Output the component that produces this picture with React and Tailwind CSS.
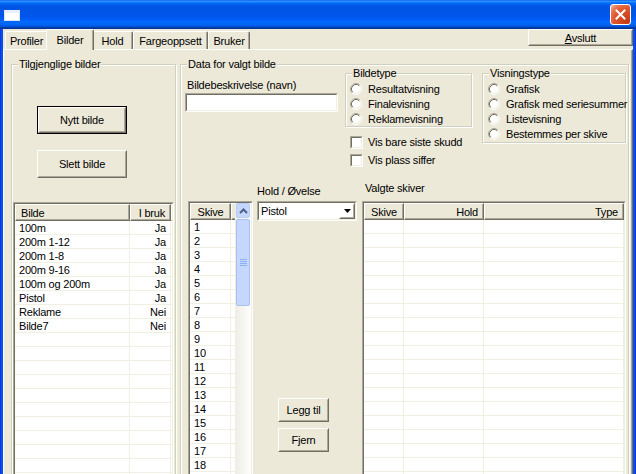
import React from 'react';

const sunkenOuter = 'border border-t-[#ACA899] border-l-[#ACA899] border-r-white border-b-white';
const sunkenInner = 'border border-t-[#716F64] border-l-[#716F64] border-r-[#F1EFE2] border-b-[#F1EFE2]';

function Btn({ def, className = '', children }) {
  return (
    <div className={`${def ? 'border border-black' : ''} ${className}`}>
      <div className="h-full w-full border border-t-white border-l-white border-r-[#716F64] border-b-[#716F64]">
        <div className="h-full w-full flex items-center justify-center border border-transparent border-r-[#ACA899] border-b-[#ACA899]">
          {children}
        </div>
      </div>
    </div>
  );
}

function Group({ label, className = '', children }) {
  return (
    <div className={`relative border border-[#D0D0BF] shadow-[inset_1px_1px_0_#fff,1px_1px_0_#fff] ${className}`}>
      <span className="absolute -top-[8px] left-[6px] bg-[#ECE9D8] px-[1px] leading-[14px]">{label}</span>
      {children}
    </div>
  );
}

function Radio({ label }) {
  return (
    <div className="flex items-center h-[15px]">
      <svg width="12" height="12" viewBox="0 0 12 12" className="shrink-0">
        <circle cx="6" cy="6" r="4.5" fill="#fff" />
        <path d="M2.11 9.89 A5.5 5.5 0 0 1 9.89 2.11" fill="none" stroke="#ACA899" />
        <path d="M9.89 2.11 A5.5 5.5 0 0 1 2.11 9.89" fill="none" stroke="#fff" />
        <path d="M2.82 9.18 A4.5 4.5 0 0 1 9.18 2.82" fill="none" stroke="#716F64" />
        <path d="M9.18 2.82 A4.5 4.5 0 0 1 2.82 9.18" fill="none" stroke="#F1EFE2" />
      </svg>
      <span className="ml-[6px] whitespace-nowrap">{label}</span>
    </div>
  );
}

function Check({ label }) {
  return (
    <div className="flex items-center h-[18px]">
      <div className={`w-[13px] h-[13px] ${sunkenOuter}`}>
        <div className={`w-full h-full bg-white ${sunkenInner}`} />
      </div>
      <span className="ml-[5px] whitespace-nowrap">{label}</span>
    </div>
  );
}

function HeadCell({ w, align = 'left', children }) {
  const j = align === 'right' ? 'justify-end' : align === 'center' ? 'justify-center' : 'justify-start';
  return (
    <div
      style={w ? { width: w } : undefined}
      className={`${w ? 'shrink-0' : 'flex-1'} h-[17px] flex items-center ${j} px-[5px] bg-[#ECE9D8] border-t border-l border-t-white border-l-white border-r border-b border-r-[#716F64] border-b-[#716F64] shadow-[inset_-1px_-1px_0_#ACA899] whitespace-nowrap`}
    >
      {children}
    </div>
  );
}

function Rows({ cols, data, count }) {
  const rows = [];
  for (let i = 0; i < count; i++) {
    const r = data[i] || [];
    rows.push(
      <div key={i} className="flex h-[14px] border-b border-[#F1EFE2]">
        {cols.map((c, j) => (
          <div
            key={j}
            style={c.w ? { width: c.w } : undefined}
            className={`${c.w ? 'shrink-0 border-r border-[#F1EFE2]' : 'flex-1'} flex items-center px-[4px] whitespace-nowrap ${c.cellAlign === 'right' ? 'justify-end' : 'justify-start'}`}
          >
            {r[j]}
          </div>
        ))}
      </div>
    );
  }
  return rows;
}

function ListView({ cols, data, count, className = '' }) {
  return (
    <div className={`${sunkenOuter} ${className}`}>
      <div className={`w-full h-full bg-white overflow-hidden ${sunkenInner}`}>
        <div className="flex">
          {cols.map((c, i) => (
            <HeadCell key={i} w={c.w} align={c.align}>{c.label}</HeadCell>
          ))}
        </div>
        <Rows cols={cols} data={data} count={count} />
      </div>
    </div>
  );
}

function ScrollBar() {
  return (
    <div className="w-[16px] h-full flex flex-col bg-[linear-gradient(to_right,#EEEDE5,#FEFEFC)]">
      <div className="h-[15px] mx-[1px] rounded-[2px] border border-[#B8CBF6] bg-[#C4D6FC] flex items-center justify-center">
        <svg width="9" height="6" viewBox="0 0 9 6">
          <polyline points="1,5 4.5,1.5 8,5" fill="none" stroke="#4D6185" strokeWidth="2" />
        </svg>
      </div>
      <div className="mt-[1px] h-[87px] mx-[1px] rounded-[2px] border border-[#A9BFF3] bg-[#C6D7FD] flex flex-col items-center justify-center gap-[1px]">
        <div className="w-[7px] h-[1px] bg-[#8DAEF5]" />
        <div className="w-[7px] h-[1px] bg-[#8DAEF5]" />
        <div className="w-[7px] h-[1px] bg-[#8DAEF5]" />
        <div className="w-[7px] h-[1px] bg-[#8DAEF5]" />
      </div>
    </div>
  );
}

function SkiveList() {
  const nums = [];
  for (let i = 1; i <= 18; i++) nums.push([String(i), '']);
  const cols = [{ w: 41, label: 'Skive', align: 'center' }, { label: '' }];
  return (
    <div className={`mt-[20px] ml-[7px] w-[65px] h-[300px] ${sunkenOuter}`}>
      <div className={`w-full h-full bg-white flex ${sunkenInner}`}>
        <div className="flex-1 min-w-0 overflow-hidden">
          <div className="flex">
            <HeadCell w={41} align="center">Skive</HeadCell>
            <HeadCell />
          </div>
          <Rows cols={cols} data={nums} count={19} />
        </div>
        <ScrollBar />
      </div>
    </div>
  );
}

function TitleBar() {
  return (
    <div className="h-[29px] shrink-0 flex items-center bg-[linear-gradient(to_bottom,#0058ee_0%,#3593ff_4%,#288eff_6%,#127dff_8%,#036ffc_10%,#0262ee_14%,#0057e5_20%,#0054e3_24%,#0055eb_56%,#005bf5_66%,#026afe_76%,#0062ef_86%,#0052d6_92%,#0040ab_94%,#003092_100%)]">
      <div className="ml-[4px] mt-[1px] w-[16px] h-[11px] bg-white border border-[#D6E4F8] border-t-[3px] border-t-[#E8F0FC]" />
      <div className="ml-auto mr-[5px] w-[21px] h-[21px] rounded-[3px] border border-white bg-[radial-gradient(circle_at_85%_85%,#c23a14_0%,#e0552c_55%,#e8704a_75%,#f5b9a5_100%)] flex items-center justify-center">
        <svg width="11" height="11" viewBox="0 0 11 11">
          <path d="M1.5 1.5 L9.5 9.5 M9.5 1.5 L1.5 9.5" stroke="#fff" strokeWidth="2" strokeLinecap="square" />
        </svg>
      </div>
    </div>
  );
}

function Tab({ w, selected, children }) {
  if (selected) {
    return (
      <div
        style={{ width: w + 4 }}
        className="relative z-10 -mx-[2px] h-[21px] -mb-[1px] bg-[#ECE9D8] rounded-t-[2px] border-t border-l border-t-white border-l-white border-r border-r-[#716F64] shadow-[inset_-1px_0_0_#ACA899] flex items-start justify-center pt-[3px]"
      >
        {children}
      </div>
    );
  }
  return (
    <div
      style={{ width: w }}
      className="h-[18px] rounded-t-[2px] border-t border-l border-t-white border-l-white border-r border-r-[#716F64] shadow-[inset_-1px_0_0_#ACA899] flex items-center justify-center"
    >
      {children}
    </div>
  );
}

export default function App() {
  const bilder = [
    ['100m', 'Ja'],
    ['200m 1-12', 'Ja'],
    ['200m 1-8', 'Ja'],
    ['200m 9-16', 'Ja'],
    ['100m og 200m', 'Ja'],
    ['Pistol', 'Ja'],
    ['Reklame', 'Nei'],
    ['Bilde7', 'Nei'],
  ];
  const leftCols = [
    { w: 115, label: 'Bilde' },
    { w: 41, label: 'I bruk', align: 'right', cellAlign: 'right' },
    { label: '' },
  ];
  const valgteCols = [
    { w: 40, label: 'Skive', align: 'center' },
    { w: 80, label: 'Hold', align: 'right' },
    { w: 140, label: 'Type', align: 'right' },
  ];

  return (
    <div className="w-[636px] h-[474px] overflow-hidden flex flex-col bg-[#0054E3] font-['Liberation_Sans',Arial,sans-serif] text-[11px] tracking-[-0.2px] leading-[14px] text-black">
      <TitleBar />
      <div className="flex flex-1 min-h-0">
        <div className="w-[3px] shrink-0 bg-[linear-gradient(to_right,#0831d9,#0a4ff0,#0a50e8)]" />
        <div className="flex-1 min-w-0 bg-[#ECE9D8] flex flex-col">
          {/* tab row */}
          <div className="h-[20px] shrink-0 flex items-end pl-[2px]">
            <Tab w={43}>Profiler</Tab>
            <Tab w={44} selected>Bilder</Tab>
            <Tab w={41}>Hold</Tab>
            <Tab w={75}>Fargeoppsett</Tab>
            <Tab w={42}>Bruker</Tab>
            <Btn className="ml-auto self-start w-[105px] h-[17px]">
              <span><span className="underline">A</span>vslutt</span>
            </Btn>
          </div>

          {/* page */}
          <div className="flex-1 min-h-0 border-t border-l border-t-white border-l-white border-r border-r-[#716F64] shadow-[inset_-1px_0_0_#ACA899] flex items-start pl-[7px] pt-[14px] gap-[4px]">
            <Group label="Tilgjenglige bilder" className="w-[165px] h-[430px] shrink-0 flex flex-col">
              <Btn def className="ml-[25px] mt-[41px] w-[90px] h-[28px]">Nytt bilde</Btn>
              <Btn className="ml-[25px] mt-[16px] w-[90px] h-[28px]">Slett bilde</Btn>
              <ListView cols={leftCols} data={bilder} count={20} className="ml-[1px] mt-[24px] w-[161px] flex-1 min-h-0" />
            </Group>

            <Group label="Data for valgt bilde" className="w-[449px] h-[430px] shrink-0 flex flex-col">
              <div className="flex items-start">
                <div className="ml-[4px] mt-[13px] flex flex-col">
                  <div className="pl-[2px] h-[14px]">Bildebeskrivelse (navn)</div>
                  <div className={`mt-[1px] w-[153px] h-[19px] ${sunkenOuter}`}>
                    <div className={`w-full h-full bg-white ${sunkenInner}`} />
                  </div>
                </div>
                <div className="ml-[7px] mt-[8px] flex flex-col">
                  <Group label="Bildetype" className="w-[127px] h-[54px] pt-[7px] pl-[4px]">
                    <Radio label="Resultatvisning" />
                    <Radio label="Finalevisning" />
                    <Radio label="Reklamevisning" />
                  </Group>
                  <div className="mt-[6px] ml-[5px]">
                    <Check label="Vis bare siste skudd" />
                    <Check label="Vis plass siffer" />
                  </div>
                </div>
                <Group label="Visningstype" className="ml-[10px] mt-[8px] w-[144px] h-[70px] pt-[7px] pl-[5px]">
                  <Radio label="Grafisk" />
                  <Radio label="Grafisk med seriesummer" />
                  <Radio label="Listevisning" />
                  <Radio label="Bestemmes per skive" />
                </Group>
              </div>

              <div className="flex items-start mt-[12px]">
                <SkiveList />
                <div className="w-[109px] shrink-0 flex flex-col">
                  <div className="mt-[3px] pl-[4px] h-[14px]">Hold / Øvelse</div>
                  <div className={`mt-[3px] ml-[4px] w-[100px] h-[20px] ${sunkenOuter}`}>
                    <div className={`w-full h-full bg-white flex items-center ${sunkenInner}`}>
                      <span className="pl-[2px] flex-1">Pistol</span>
                      <Btn className="w-[16px] h-full">
                        <svg width="7" height="4" viewBox="0 0 7 4">
                          <path d="M0 0 H7 L3.5 4 Z" fill="#000" />
                        </svg>
                      </Btn>
                    </div>
                  </div>
                  <Btn className="ml-[25px] mt-[177px] w-[51px] h-[24px]">Legg til</Btn>
                  <Btn className="ml-[25px] mt-[6px] w-[51px] h-[24px]">Fjern</Btn>
                </div>
                <div className="flex flex-col">
                  <div className="pl-[3px] h-[14px]">Valgte skiver</div>
                  <ListView cols={valgteCols} data={[]} count={19} className="mt-[6px] w-[264px] h-[300px]" />
                </div>
              </div>
            </Group>
          </div>
        </div>
        <div className="w-[3px] shrink-0 bg-[linear-gradient(to_right,#0a50e8,#0a4ff0,#0831d9)]" />
      </div>
    </div>
  );
}
